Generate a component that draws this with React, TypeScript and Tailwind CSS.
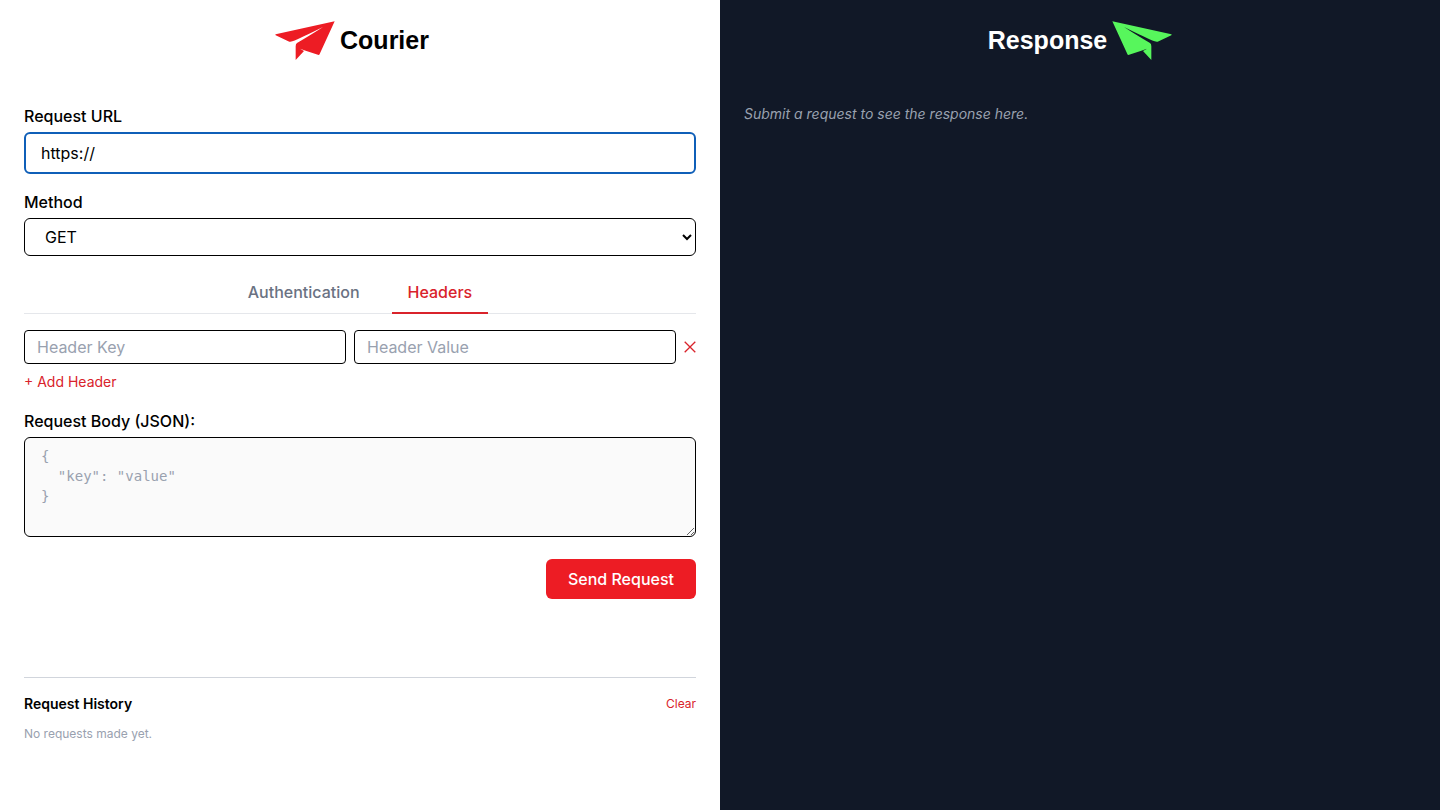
import { useState } from "react";

function Plane({ className }: { className: string }) {
  return (
    <svg viewBox="0 0 180 118" className={className} fill="currentColor" aria-hidden="true">
      <path d="M179 0 L2 39 Q0 40 2 42 L43 61 Q47 62 52 60 Q78 50 144 17 Q112 38 66 65 Q62 68 62 75 L62 116 L87 89 L75 82 L92 88 L131 101 Q133 101 134 98 Z" />
    </svg>
  );
}

function Tab({ label, active, onClick }: { label: string; active: boolean; onClick: () => void }) {
  return (
    <button
      type="button"
      role="tab"
      aria-selected={active}
      onClick={onClick}
      className={
        active
          ? "-mb-px border-b-2 border-[#d9232b] px-4 py-2 font-medium text-[#d9232b]"
          : "-mb-px border-b-2 border-transparent px-4 py-2 font-medium text-gray-500"
      }
    >
      {label}
    </button>
  );
}

export default function App() {
  const [url, setUrl] = useState("https://");
  const [tab, setTab] = useState("Headers");

  return (
    <div className="grid min-h-screen grid-cols-2 bg-white font-['Inter',sans-serif] text-base text-black">
      <main className="flex flex-col px-6 pt-[21px] pb-16">
        <h1 className="flex h-10 items-center justify-center gap-[5px] pr-4 font-['Liberation_Sans',sans-serif] text-[25px] font-bold">
          <Plane className="h-10 w-[60px] text-[#ed1c24]" />
          Courier
        </h1>

        <form className="mt-[43px] flex flex-col gap-4" onSubmit={(e) => e.preventDefault()}>
          <div className="flex flex-col gap-1">
            <label htmlFor="url" className="font-medium">Request URL</label>
            <input
              id="url"
              type="text"
              value={url}
              onChange={(e) => setUrl(e.target.value)}
              className="w-full rounded-md border-2 border-[#0f5fb8] px-[15px] py-[7px] outline-none"
            />
          </div>

          <div className="flex flex-col gap-1">
            <label htmlFor="method" className="font-medium">Method</label>
            <select id="method" className="h-[38px] w-full rounded-md border border-black bg-white px-4">
              <option>GET</option>
              <option>POST</option>
              <option>PUT</option>
              <option>PATCH</option>
              <option>DELETE</option>
            </select>
          </div>

          <div role="tablist" className="flex justify-center gap-4 border-b border-gray-200">
            <Tab label="Authentication" active={tab === "Authentication"} onClick={() => setTab("Authentication")} />
            <Tab label="Headers" active={tab === "Headers"} onClick={() => setTab("Headers")} />
          </div>

          <div className="flex flex-col items-start gap-2 pb-px">
            <div className="flex w-full items-center gap-2">
              <input
                type="text"
                aria-label="Header Key"
                placeholder="Header Key"
                className="min-w-0 flex-1 rounded border border-black px-3 py-1 placeholder:text-gray-400"
              />
              <input
                type="text"
                aria-label="Header Value"
                placeholder="Header Value"
                className="min-w-0 flex-1 rounded border border-black px-3 py-1 placeholder:text-gray-400"
              />
              <button type="button" aria-label="Remove header" className="text-[#d9232b]">
                <svg viewBox="0 0 12 12" className="h-3 w-3" fill="none" stroke="currentColor" strokeWidth="1.3" aria-hidden="true">
                  <path d="M0.7 0.7 L11.3 11.3 M11.3 0.7 L0.7 11.3" />
                </svg>
              </button>
            </div>
            <button type="button" className="text-sm text-[#d9232b]">+ Add Header</button>
          </div>

          <div className="flex flex-col gap-1">
            <label htmlFor="body" className="font-medium">Request Body (JSON):</label>
            <textarea
              id="body"
              placeholder={'{\n  "key": "value"\n}'}
              className="h-[100px] w-full rounded-md border border-black bg-[#fafafa] px-4 py-2 font-['DejaVu_Sans_Mono',monospace] text-sm placeholder:text-gray-400"
            />
          </div>

          <button type="submit" className="mt-1.5 self-end rounded-md bg-[#ed1c24] px-[22px] py-2 font-medium text-white">
            Send Request
          </button>
        </form>

        <section className="mt-[78px] border-t border-gray-300 pt-4">
          <div className="flex items-center justify-between">
            <h2 className="text-sm font-semibold">Request History</h2>
            <button type="button" className="text-xs text-[#d9232b]">Clear</button>
          </div>
          <p className="mt-3 text-xs text-gray-400">No requests made yet.</p>
        </section>
      </main>

      <aside className="bg-[#111827] px-6 pt-[21px] text-white">
        <h2 className="flex h-10 items-center justify-center gap-[5px] font-['Liberation_Sans',sans-serif] text-[25px] font-bold">
          Response
          <Plane className="h-10 w-[60px] -scale-x-100 text-[#57f65c]" />
        </h2>
        <p className="mt-[43px] text-sm text-gray-400 italic">Submit a request to see the response here.</p>
      </aside>
    </div>
  );
}
